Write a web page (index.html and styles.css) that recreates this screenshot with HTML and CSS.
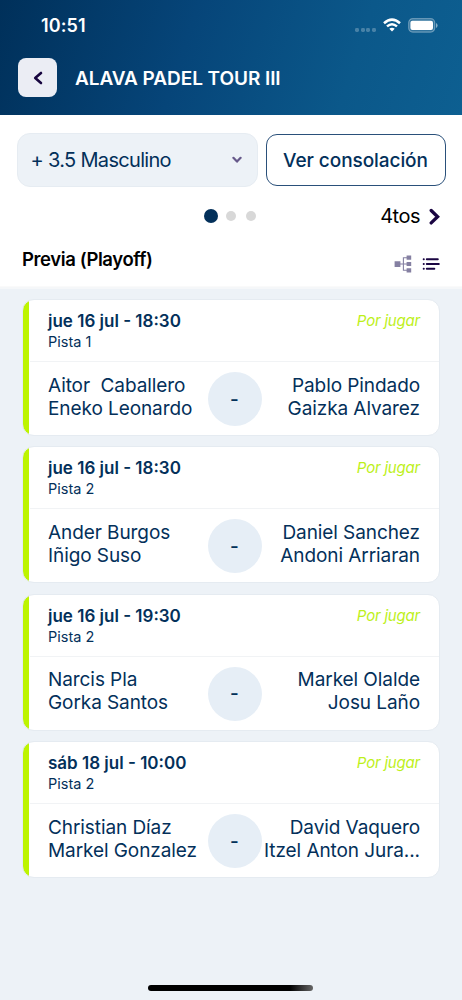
FILE: index.html
```html
<!DOCTYPE html>
<html lang="es">
<head>
<meta charset="utf-8">
<title>Alava Padel Tour III</title>
<link rel="stylesheet" href="styles.css">
</head>
<body>
<div class="app">
  <header class="header">
    <div class="status">
      <span class="clock">10:51</span>
      <div class="indicators">
        <span class="signal"><i></i><i></i><i></i><i></i></span>
        <svg class="wifi" width="18" height="14" viewBox="0 0 18 14" fill="none" stroke="#fff" stroke-width="2.5"><path d="M1 5.2Q9-2 17 5.2M4 8.4Q9 4.1 14 8.4"/><path d="M9 13.5L6.3 10.8Q9 8.7 11.7 10.8Z" fill="#fff" stroke="none"/></svg>
        <svg class="battery" width="30" height="15" viewBox="0 0 30 15"><rect x=".7" y=".7" width="26" height="13.4" rx="4" fill="#fff" fill-opacity=".15" stroke="#fff" stroke-opacity=".35" stroke-width="1.2"/><rect x="2.4" y="2.7" width="22.6" height="9.4" rx="2" fill="#fff"/><path d="M28 5v5q1.6-.7 1.6-2.5T28 5z" fill="#fff" fill-opacity=".5"/></svg>
      </div>
    </div>
    <div class="titlebar">
      <button class="back" aria-label="Volver"><svg width="10" height="14" viewBox="0 0 10 14"><path d="M8 2L2.2 7 8 12" fill="none" stroke="#17053f" stroke-width="2.6" stroke-linecap="round" stroke-linejoin="round"/></svg></button>
      <h1 class="title">ALAVA PADEL TOUR III</h1>
    </div>
  </header>
  <section class="filters">
    <div class="select"><span class="select-text">+ 3.5 Masculino</span><svg width="10" height="8" viewBox="0 0 10 8"><path d="M1.4 1.8L5 5.6l3.6-3.8" fill="none" stroke="#66598a" stroke-width="2.2" stroke-linecap="round" stroke-linejoin="round"/></svg></div>
    <button class="consolation"><span>Ver consolación</span></button>
  </section>
  <nav class="pager">
    <div class="dots"><i class="dot active"></i><i class="dot"></i><i class="dot"></i></div>
    <div class="next"><span class="next-text">4tos</span><svg width="11" height="17" viewBox="0 0 11 17"><path d="M2.2 2.5L8.6 8.7l-6.4 6.2" fill="none" stroke="#1a0542" stroke-width="3.3" stroke-linecap="round" stroke-linejoin="miter"/></svg></div>
  </nav>
  <div class="round">
    <h2 class="round-title">Previa (Playoff)</h2>
    <div class="views">
      <svg width="18" height="18" viewBox="0 0 18 18"><path d="M5 9h9M14 2.7H9.4v12.6H14" fill="none" stroke="#8580a2" stroke-width="1.1"/><path d="M.6 6.2h5.8v5.8H.6zM12.6.6h4.6v4.2h-4.6zM12.6 6.9h4.6v4.2h-4.6zM12.6 13.2h4.6v4.2h-4.6z" fill="#8580a2"/></svg>
      <svg width="18" height="14" viewBox="0 0 18 14" fill="none" stroke="#1a0542" stroke-width="2" stroke-linecap="round"><path d="M4.8 2.2h11M4.8 7h12M4.8 11.8h7.5M1.7 2.2h.1M1.7 7h.1M1.7 11.8h.1"/></svg>
    </div>
  </div>
  <main class="matches">
    <article class="match">
      <div class="match-head"><div><div class="date">jue 16 jul - 18:30</div><div class="court">Pista 1</div></div><em class="state">Por jugar</em></div>
      <div class="match-body"><div class="team">Aitor&nbsp; Caballero<br>Eneko Leonardo</div><div class="score">-</div><div class="team away">Pablo Pindado<br>Gaizka Alvarez</div></div>
    </article>
    <article class="match">
      <div class="match-head"><div><div class="date">jue 16 jul - 18:30</div><div class="court">Pista 2</div></div><em class="state">Por jugar</em></div>
      <div class="match-body"><div class="team">Ander Burgos<br>Iñigo Suso</div><div class="score">-</div><div class="team away">Daniel Sanchez<br>Andoni Arriaran</div></div>
    </article>
    <article class="match">
      <div class="match-head"><div><div class="date">jue 16 jul - 19:30</div><div class="court">Pista 2</div></div><em class="state">Por jugar</em></div>
      <div class="match-body"><div class="team">Narcis Pla<br>Gorka Santos</div><div class="score">-</div><div class="team away">Markel Olalde<br>Josu Laño</div></div>
    </article>
    <article class="match">
      <div class="match-head"><div><div class="date">sáb 18 jul - 10:00</div><div class="court">Pista 2</div></div><em class="state">Por jugar</em></div>
      <div class="match-body"><div class="team">Christian Díaz<br>Markel Gonzalez</div><div class="score">-</div><div class="team away">David Vaquero<br>Itzel Anton Jura...</div></div>
    </article>
  </main>
  <div class="home-bar"></div>
</div>
</body>
</html>
```

FILE: styles.css
```css
* { box-sizing: border-box; }
body { margin: 0; font-family: Inter, sans-serif; color: #03305a; }
button { font: inherit; color: inherit; padding: 0; }
h1, h2 { margin: 0; }
svg { display: block; }
.app { width: 462px; height: 1000px; display: flex; flex-direction: column; background: #fff; overflow: hidden; }

.header { height: 115px; flex: none; background: linear-gradient(108deg, #00305a 0%, #064579 40%, #0b588a 75%, #0d5f91 100%); color: #fff; }
.status { height: 51px; padding: 15px 24px 0 41px; display: flex; justify-content: space-between; }
.clock { font-size: 18px; line-height: 22px; font-weight: 600; letter-spacing: .1px; }
.indicators { display: flex; align-items: flex-start; }
.signal { display: flex; gap: 1.6px; margin: 13px 7px 0 0; }
.signal i { width: 4px; height: 4px; border-radius: 1.4px; background: #fff; opacity: .25; }
.wifi { margin: 3px 7px 0 0; }
.battery { margin-top: 3px; }
.titlebar { display: flex; align-items: center; padding: 7px 18px 0; gap: 18px; }
.back { width: 39px; height: 39px; border: 0; border-radius: 8px; background: #ebedf4; display: flex; align-items: center; justify-content: center; }
.title { font-size: 19px; line-height: 24px; padding-top: 2px; font-weight: 600; letter-spacing: -.06px; white-space: nowrap; }

.filters { flex: none; display: flex; gap: 8px; padding: 18px 16.5px 0 16.5px; align-items: center; }
.select { width: 241px; height: 54px; border-radius: 13px; background: #edf2f7; border: 1px solid #e6ecf2; padding: 0 15px 0 13px; display: flex; align-items: center; justify-content: space-between; }
.select-text { font-size: 20px; letter-spacing: -.68px; }
.consolation { flex: 1; height: 52px; border: 1.4px solid #2a507a; border-radius: 11px; background: #fff; font-size: 19px; font-weight: 500; letter-spacing: -.07px; white-space: nowrap; }

.pager { flex: none; height: 58px; padding: 0 22px 0 204px; display: flex; align-items: center; justify-content: space-between; color: #000; }
.dots { display: flex; align-items: center; gap: 10px; }
.dot { width: 10px; height: 10px; border-radius: 50%; background: #d8d8d8; }
.dot.active { width: 14px; height: 14px; background: #03305a; margin-right: -2px; }
.next { display: flex; align-items: center; gap: 9px; }
.next-text { font-size: 20px; letter-spacing: -.5px; }

.round { flex: none; height: 42px; padding: 0 22px; display: flex; justify-content: space-between; color: #000; border-bottom: 1px solid #fafafa; }
.round-title { margin-top: 3px; font-size: 18.5px; line-height: 22px; font-weight: 600; letter-spacing: -.4px; }
.views { display: flex; align-items: center; gap: 10px; height: 38px; }

.matches { flex: 1; background: #edf2f7; border-top: 2px solid #f5f7f9; padding: 10px 22px 0; display: flex; flex-direction: column; gap: 10.4px; }
.match { height: 137px; border: 1px solid #e5ebf1; border-radius: 12px; background: linear-gradient(90deg, #bdf400 7px, #fff 7px) border-box; padding-left: 7px; overflow: hidden; }
.match-head { height: 62px; border-bottom: 1px solid #f1f3f5; padding: 11px 18px 0; display: flex; justify-content: space-between; }
.date { font-size: 17px; line-height: 21px; font-weight: 600; }
.court { font-size: 14.5px; line-height: 20px; }
.state { color: #bdf01b; font-size: 15px; line-height: 20px; letter-spacing: -.2px; padding-right: 1px; }
.match-body { height: 74px; padding: 0 18px; display: grid; grid-template-columns: 159.5px 54px 158.5px; align-items: center; }
.team { font-size: 19px; line-height: 23px; letter-spacing: -.08px; white-space: nowrap; margin-top: -5px; }
.away { text-align: right; }
.score { width: 54px; height: 54px; border-radius: 50%; background: #e6eef6; display: flex; align-items: center; justify-content: center; font-size: 19px; font-weight: 500; }
.home-bar { position: absolute; left: 148px; top: 985px; width: 165px; height: 6px; border-radius: 3px; background: linear-gradient(90deg, #000 86%, #666); }
```
